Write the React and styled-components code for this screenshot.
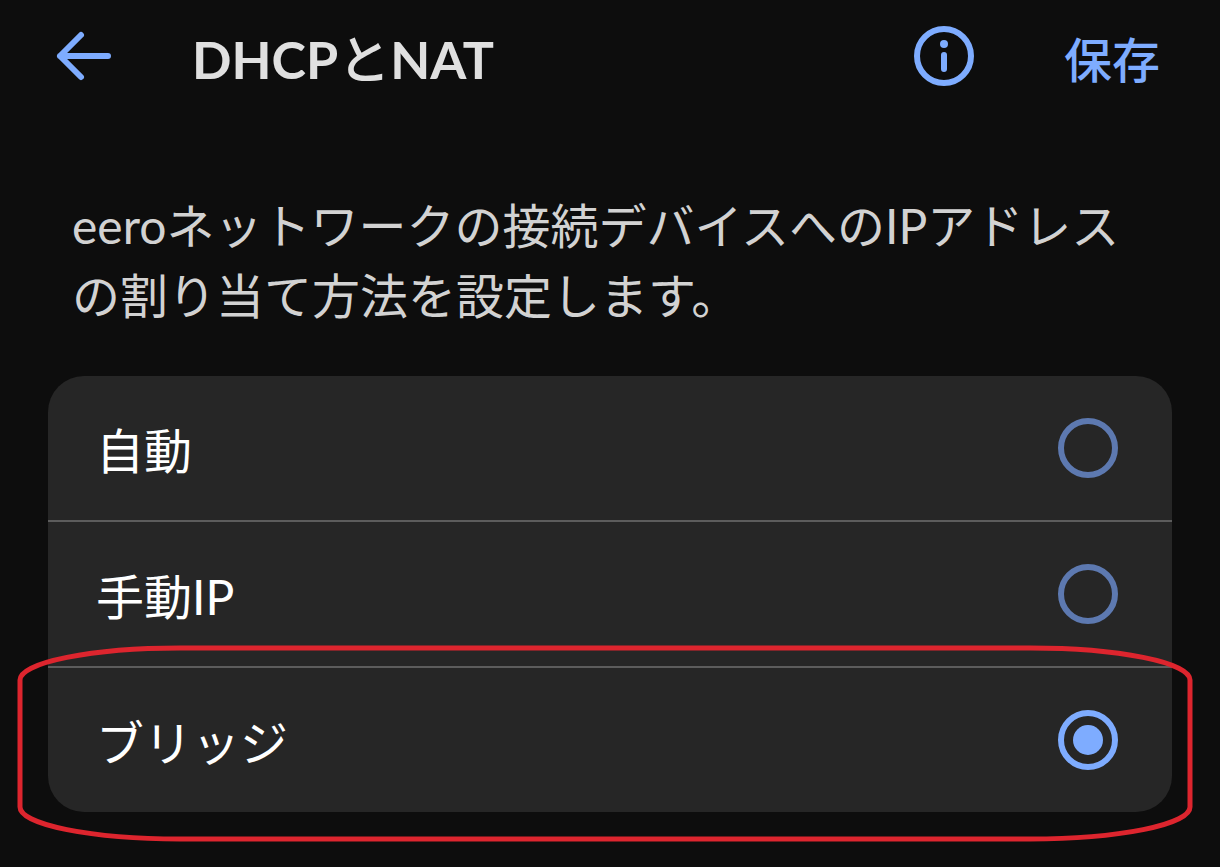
import React, { useState } from "react";
import styled, { createGlobalStyle } from "styled-components";

const GlobalStyle = createGlobalStyle`
  * {
    box-sizing: border-box;
  }
  body {
    margin: 0;
    background-color: #0d0d0d;
    color: #d2d2d2;
    font-family: Lato, "Noto Sans CJK JP", sans-serif;
  }
`;

const Header = styled.header`
  display: flex;
  align-items: center;
  height: 112px;
  padding: 0 60px 0 54px;
`;

const IconButton = styled.button`
  display: flex;
  flex-shrink: 0;
  width: 60px;
  height: 60px;
  padding: 0;
  border: none;
  background: none;
  color: #7eacff;
  cursor: pointer;
`;

const Title = styled.h1`
  flex: 1;
  margin: 0;
  padding: 6px 0 0 78px;
  color: #e0e0e0;
  font-size: 52px;
  line-height: 60px;
  font-weight: 700;
`;

// kana looks too heavy next to the bold latin letters
const Kana = styled.span`
  font-weight: 500;
`;

const SaveButton = styled.button`
  margin-left: 90px;
  padding: 8px 0 0;
  border: none;
  background: none;
  color: #7eacff;
  font-family: inherit;
  font-size: 48px;
  line-height: 60px;
  font-weight: 500;
  cursor: pointer;
`;

const Description = styled.p`
  margin: 0;
  padding: 79px 72px 45px;
  font-size: 48px;
  line-height: 70px;
`;

const OptionList = styled.div`
  margin: 0 48px 48px;
  border-radius: 36px;
  background-color: #262626;
`;

const Option = styled.label`
  position: relative;
  display: flex;
  align-items: center;
  justify-content: space-between;
  height: 144px;
  padding: 0 54px 0 48px;
  color: #ffffff;
  cursor: pointer;

  & + & {
    height: 146px;
    border-top: 2px solid #5c5c5c;
  }
`;

const OptionName = styled.span`
  padding-top: 6px;
  font-size: 48px;
  line-height: 60px;
`;

const Radio = styled.input`
  appearance: none;
  display: grid;
  place-items: center;
  width: 60px;
  height: 60px;
  margin: 0;
  border: 6px solid #5d79b0;
  border-radius: 50%;

  &:checked {
    border-color: #7eacff;
  }
  &:checked::before {
    content: "";
    width: 30px;
    height: 30px;
    border-radius: 50%;
    background-color: #7eacff;
  }
`;

const Ring = styled.svg`
  position: absolute;
  top: -20px;
  left: -28px;
  width: calc(100% + 46px);
  height: calc(100% + 47px);
  overflow: visible;
  pointer-events: none;
`;

const options = [
  { id: "auto", name: "自動" },
  { id: "manual", name: "手動IP" },
  { id: "bridge", name: "ブリッジ", marked: true }
];

const BackIcon = () => (
  <svg width="60" height="60" viewBox="0 0 60 60" fill="none" aria-hidden="true">
    <path
      d="M27 9 L6 30 L27 51 M6 30 H54"
      stroke="currentColor"
      strokeWidth="6"
      strokeLinecap="round"
      strokeLinejoin="round"
    />
  </svg>
);

const InfoIcon = () => (
  <svg width="60" height="60" viewBox="0 0 60 60" fill="none" aria-hidden="true">
    <circle cx="30" cy="30" r="27" stroke="currentColor" strokeWidth="6" />
    <circle cx="30" cy="18" r="4" fill="currentColor" />
    <path d="M30 29 V43" stroke="currentColor" strokeWidth="6" strokeLinecap="round" />
  </svg>
);

const App = () => {
  const [selected, setSelected] = useState("bridge");

  return (
    <>
      <GlobalStyle />
      <Header>
        <IconButton type="button" aria-label="戻る">
          <BackIcon />
        </IconButton>
        <Title>
          DHCP<Kana>と</Kana>NAT
        </Title>
        <IconButton type="button" aria-label="情報">
          <InfoIcon />
        </IconButton>
        <SaveButton type="button">保存</SaveButton>
      </Header>
      <main>
        <Description>
          eeroネットワークの接続デバイスへのIPアドレスの割り当て方法を設定します。
        </Description>
        <OptionList role="radiogroup" aria-label="DHCPとNAT">
          {options.map(option => (
            <Option key={option.id}>
              <OptionName>{option.name}</OptionName>
              <Radio
                type="radio"
                name="mode"
                value={option.id}
                checked={selected === option.id}
                onChange={() => setSelected(option.id)}
              />
              {option.marked && (
                <Ring aria-hidden="true">
                  <rect width="100%" height="100%" rx="160" ry="32" fill="none" stroke="#dd252e" strokeWidth="5" />
                </Ring>
              )}
            </Option>
          ))}
        </OptionList>
      </main>
    </>
  );
};

export default App;
